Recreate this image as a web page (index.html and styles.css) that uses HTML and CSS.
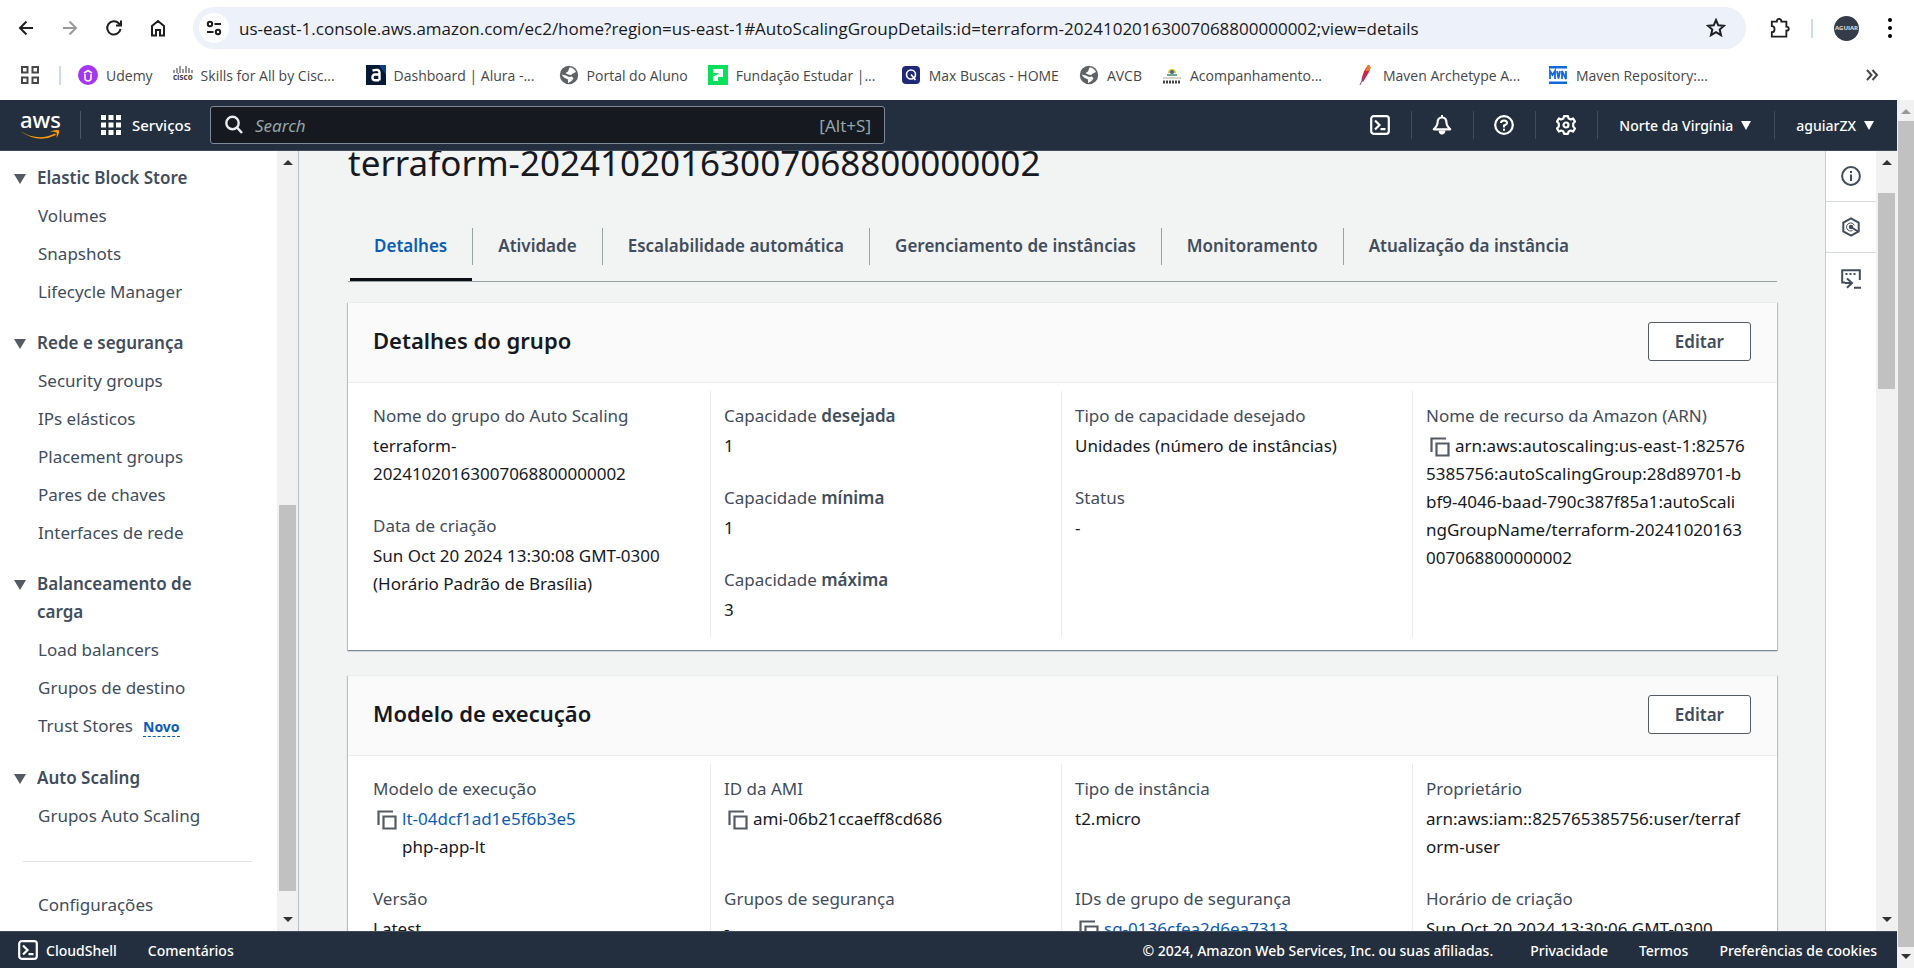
FILE: index.html
```html
<!DOCTYPE html>
<html lang="pt-BR">
<head>
<meta charset="utf-8">
<title>Grupo do Auto Scaling | EC2</title>
<link rel="stylesheet" href="styles.css">
</head>
<body>
<svg class="defs" aria-hidden="true">
  <symbol id="copy" viewBox="0 0 20 20"><path d="M1.500 15V1.500H16M6.500 6.500H18.500V18.500H6.500Z" fill="none" stroke="currentColor" stroke-width="2.200"/></symbol>
  <symbol id="globe" viewBox="0 0 20 20"><circle cx="10" cy="10" r="9.200" fill="#5f6368"/><path d="M10.500 2.500C12 2 16 4 17 7l-3 1.500-2 1.500-3-.500L6.500 8 9 6.500zM2.500 9.500l4.500 1 3 1.500 3-.500 1.500 2-2.500 3-3 1.500v-3.500L5 12.500z" fill="#fff"/></symbol>
  <symbol id="shell" viewBox="0 0 20 20"><rect x="1.200" y="1.200" width="17.600" height="17.600" rx="2.500" fill="none" stroke="currentColor" stroke-width="2.200"/><path d="M5 5.500 9.500 10 5 14.500M10.500 14.200H15.500" fill="none" stroke="currentColor" stroke-width="2.200"/></symbol>
</svg>

<header class="browser">
  <div class="toolbar">
    <nav class="history" aria-label="Histórico">
      <button aria-label="Voltar"><svg viewBox="0 0 20 20"><path d="M17 10H4M10.500 3.500 4 10l6.500 6.500" class="line"/></svg></button>
      <button class="muted" aria-label="Avançar"><svg viewBox="0 0 20 20"><path d="M3 10H16M9.500 3.500 16 10l-6.500 6.500" class="line"/></svg></button>
      <button aria-label="Recarregar"><svg viewBox="0 0 20 20"><path d="M16.500 11A6.700 6.700 0 1 1 14.800 5.300L17 7.500M17 2.500V7.500H12" class="line"/></svg></button>
      <button aria-label="Página inicial"><svg viewBox="0 0 20 20"><path d="M4 17.500V8L10 3l6 5V17.500H12V12H8V17.500Z" class="line"/></svg></button>
    </nav>
    <div class="address">
      <button class="site-info" aria-label="Informações do site"><svg viewBox="0 0 18 18"><circle cx="5" cy="5" r="2.200" class="line"/><circle cx="13" cy="13" r="2.200" class="line"/><path d="M9.500 5H16M2 13H8.500" class="line"/></svg></button>
      <input class="url" type="text" aria-label="Endereço" value="us-east-1.console.aws.amazon.com/ec2/home?region=us-east-1#AutoScalingGroupDetails:id=terraform-20241020163007068800000002;view=details">
      <button class="star" aria-label="Favoritar"><svg viewBox="0 0 20 20"><path d="M10 2 12.300 7.300 18 7.800 13.700 11.600 15 17.200 10 14.200 5 17.200 6.300 11.600 2 7.800 7.700 7.300Z" class="line"/></svg></button>
    </div>
    <div class="browser-actions">
      <button aria-label="Extensões"><svg viewBox="0 0 22 24"><path d="M2 5H7.500C7.500 1 12.500 1 12.500 5H18V10.500C21.500 10.500 21.500 15 18 15V21.500H2V16.500C6 16.500 6 10 2 10Z" class="line"/></svg></button>
      <span class="bar"></span>
      <button class="avatar" aria-label="Perfil">AGUIAR</button>
      <button aria-label="Menu"><svg viewBox="0 0 20 24"><circle cx="10" cy="4" r="2"/><circle cx="10" cy="12" r="2"/><circle cx="10" cy="20" r="2"/></svg></button>
    </div>
  </div>
  <nav class="bookmarks" aria-label="Favoritos">
    <button class="apps" aria-label="Apps"><svg viewBox="0 0 20 20"><path d="M2 2H7.500V7.500H2ZM12.500 2H18V7.500H12.500ZM2 12.500H7.500V18H2ZM12.500 12.500H18V18H12.500Z" class="line"/></svg></button>
    <span class="bar"></span>
    <a href="#"><svg viewBox="0 0 20 20"><circle cx="10" cy="10" r="10" fill="#a435f0"/><path d="M6 8 10 5.500 14 8M7 9V13Q7 16 10 16T13 13V9" fill="none" stroke="#fff" stroke-width="1.600"/></svg>Udemy</a>
    <a href="#" class="clipped"><svg viewBox="0 0 20 20"><path d="M1 5V8M4 3V8M7 1V8M10 4V8M13 1V8M16 3V8M19 5V8" stroke="#555" stroke-width="1.200"/><text x="0" y="15" font-size="8" font-weight="700" fill="#444">cisco</text></svg>Skills for All by Cisc...</a>
    <a href="#" class="clipped"><svg viewBox="0 0 20 20"><path d="M0 0H20V20H0Z" fill="#051933"/><path d="M13 0H20V10Z" fill="#0b3f8c"/><path d="M6.500 5.500Q13.500 3.500 13.500 7.500V15.500M13.500 9.500H8.500Q6.500 10 6.500 12.500T8.500 15.300H13" fill="none" stroke="#fff" stroke-width="2.400"/></svg>Dashboard | Alura -...</a>
    <a href="#"><svg><use href="#globe"/></svg>Portal do Aluno</a>
    <a href="#" class="clipped"><svg viewBox="0 0 20 20"><path d="M0 0H20V20H0Z" fill="#0be05c"/><path d="M5 4H15V12H10V16H5V11.500L10.500 9V8H5Z" fill="#fff"/></svg>Fundação Estudar |...</a>
    <a href="#"><svg viewBox="0 0 20 20"><rect x="1" y="1" width="18" height="18" rx="4" fill="#1e2a78"/><circle cx="10" cy="9.500" r="4.500" fill="none" stroke="#fff" stroke-width="1.600"/><path d="M10 9.500 14.500 15" stroke="#fff" stroke-width="1.600"/></svg>Max Buscas - HOME</a>
    <a href="#"><svg><use href="#globe"/></svg>AVCB</a>
    <a href="#" class="clipped"><svg viewBox="0 0 20 20"><path d="M6 8A4 4 0 0 1 14 8" fill="#e4c321"/><circle cx="10" cy="7" r="2" fill="#33689b"/><path d="M5 10H15" stroke="#3c8b62" stroke-width="1.500"/><path d="M1 13H19" stroke="#aaa"/><path d="M1 17H19" stroke="#444" stroke-width="3" stroke-dasharray="2 1"/></svg>Acompanhamento...</a>
    <a href="#" class="clipped"><svg viewBox="0 0 20 20"><path d="M13 0Q17 0 14 7L8 17Q6 16 7 12Q9 5 13 0Z" fill="#c9234b"/><path d="M13 0Q17 0 14.500 6L10.500 6Q11 3 13 0Z" fill="#ec7a24"/><path d="M9 11 5 20" stroke="#84519d"/></svg>Maven Archetype A...</a>
    <a href="#" class="clipped"><svg viewBox="0 0 20 20"><path d="M1 1H19V3.500H1ZM1 16.500H19V19H1Z" fill="#1369da"/><path d="M2 14V6L4.500 10 7 6V14M9 6 10.500 13.500 12 6M14 14V6L18 14V6" fill="none" stroke="#1369da" stroke-width="1.800"/></svg>Maven Repository:...</a>
    <button class="more" aria-label="Mais favoritos"><svg viewBox="0 0 14 14"><path d="M2 2 6.500 7 2 12M7.500 2 12 7 7.500 12" class="line"/></svg></button>
  </nav>
</header>

<div class="viewport">
  <div class="console">
    <header class="aws-nav">
      <a class="logo" href="#" aria-label="AWS">aws<svg viewBox="0 0 40 10"><path d="M0 1Q18 12 35 3.500L36 5Q18 14 0 1ZM30 1.500Q38-1 39 .500T36.500 8Q37 4 36.500 2.500Q34 1.500 30 1.500Z" fill="#f90"/></svg></a>
      <span class="rule"></span>
      <button class="services"><svg viewBox="0 0 20 20"><path d="M0 0H5V5H0ZM7.500 0H12.500V5H7.500ZM15 0H20V5H15ZM0 7.500H5V12.500H0ZM7.500 7.500H12.500V12.500H7.500ZM15 7.500H20V12.500H15ZM0 15H5V20H0ZM7.500 15H12.500V20H7.500ZM15 15H20V20H15Z" fill="currentColor"/></svg>Serviços</button>
      <label class="search"><svg viewBox="0 0 20 20"><circle cx="8.500" cy="8" r="6.200" fill="none" stroke="currentColor" stroke-width="2.400"/><path d="M13 12.500 18 18" stroke="currentColor" stroke-width="2.600"/></svg><input type="text" placeholder="Search" aria-label="Search"><span>[Alt+S]</span></label>
      <div class="nav-tools">
        <button aria-label="CloudShell"><svg><use href="#shell"/></svg></button>
        <button aria-label="Notificações"><svg viewBox="0 0 20 20"><path d="M10 2.500C6.500 2.500 5.500 5 5.500 8Q5.500 10.500 1.800 14.300H18.200Q14.500 10.500 14.500 8C14.500 5 13.500 2.500 10 2.500Z" fill="none" stroke="currentColor" stroke-width="2.200" stroke-linejoin="round"/><path d="M10 0V3" stroke="currentColor" stroke-width="2"/><path d="M6.500 15.500H13.500Q13 19.500 10 19.500T6.500 15.500Z" fill="currentColor"/></svg></button>
        <button aria-label="Ajuda"><svg viewBox="0 0 20 20"><circle cx="10" cy="10" r="8.800" fill="none" stroke="currentColor" stroke-width="2.200"/><path d="M7 8Q7 5.500 10 5.500T13 8Q13 9.500 10 10.500V12.500" fill="none" stroke="currentColor" stroke-width="2"/><path d="M9 13.700H11V15.700H9Z" fill="currentColor"/></svg></button>
        <button aria-label="Configurações"><svg viewBox="0 0 20 20"><path d="M8 1.200H12L12.600 3.500 14.800 4.500 17 3.400 19 6.600 17.200 8.500V11.500L19 13.400 17 16.600 14.800 15.500 12.600 16.500 12 18.800H8L7.400 16.500 5.200 15.500 3 16.600 1 13.400 2.800 11.500V8.500L1 6.600 3 3.400 5.200 4.500 7.400 3.500Z" fill="none" stroke="currentColor" stroke-width="2.200" stroke-linejoin="round"/><circle cx="10" cy="10" r="2.500" fill="none" stroke="currentColor" stroke-width="2.200"/></svg></button>
        <button class="menu">Norte da Virgínia<i class="caret"></i></button>
        <button class="menu">aguiarZX<i class="caret"></i></button>
      </div>
    </header>

    <div class="workspace">
      <aside class="sidebar">
        <nav class="side-nav" aria-label="EC2">
          <section>
            <button class="group"><i class="caret"></i>Elastic Block Store</button>
            <a href="#">Volumes</a><a href="#">Snapshots</a><a href="#">Lifecycle Manager</a>
          </section>
          <section>
            <button class="group"><i class="caret"></i>Rede e segurança</button>
            <a href="#">Security groups</a><a href="#">IPs elásticos</a><a href="#">Placement groups</a><a href="#">Pares de chaves</a><a href="#">Interfaces de rede</a>
          </section>
          <section>
            <button class="group"><i class="caret"></i><span>Balanceamento de<br>carga</span></button>
            <a href="#">Load balancers</a><a href="#">Grupos de destino</a><a href="#">Trust Stores<span class="new">Novo</span></a>
          </section>
          <section>
            <button class="group"><i class="caret"></i>Auto Scaling</button>
            <a href="#">Grupos Auto Scaling</a>
          </section>
          <hr>
          <a href="#">Configurações</a>
        </nav>
        <div class="scroll scroll-side"><i class="up"></i><i class="before"></i><i class="thumb"></i><i class="after"></i><i class="down"></i></div>
      </aside>

      <main class="content">
        <h1>terraform-20241020163007068800000002</h1>
        <div class="tabs" role="tablist">
          <button role="tab" aria-selected="true">Detalhes</button>
          <button role="tab" aria-selected="false">Atividade</button>
          <button role="tab" aria-selected="false">Escalabilidade automática</button>
          <button role="tab" aria-selected="false">Gerenciamento de instâncias</button>
          <button role="tab" aria-selected="false">Monitoramento</button>
          <button role="tab" aria-selected="false">Atualização da instância</button>
        </div>

        <section class="card">
          <header><h2>Detalhes do grupo</h2><button>Editar</button></header>
          <div class="columns">
            <dl>
              <div><dt>Nome do grupo do Auto Scaling</dt><dd>terraform-<br>20241020163007068800000002</dd></div>
              <div><dt>Data de criação</dt><dd>Sun Oct 20 2024 13:30:08 GMT-0300<br>(Horário Padrão de Brasília)</dd></div>
            </dl>
            <dl>
              <div><dt>Capacidade <b>desejada</b></dt><dd>1</dd></div>
              <div><dt>Capacidade <b>mínima</b></dt><dd>1</dd></div>
              <div><dt>Capacidade <b>máxima</b></dt><dd>3</dd></div>
            </dl>
            <dl>
              <div><dt>Tipo de capacidade desejado</dt><dd>Unidades (número de instâncias)</dd></div>
              <div><dt>Status</dt><dd>-</dd></div>
            </dl>
            <dl>
              <div><dt>Nome de recurso da Amazon (ARN)</dt><dd><svg class="copy"><use href="#copy"/></svg>arn:aws:autoscaling:us-east-1:82576<br>5385756:autoScalingGroup:28d89701-b<br>bf9-4046-baad-790c387f85a1:autoScali<br>ngGroupName/terraform-20241020163<br>007068800000002</dd></div>
            </dl>
          </div>
        </section>

        <section class="card">
          <header><h2>Modelo de execução</h2><button>Editar</button></header>
          <div class="columns rows">
            <dl>
              <div><dt>Modelo de execução</dt><dd><svg class="copy"><use href="#copy"/></svg><a href="#">lt-04dcf1ad1e5f6b3e5</a><span class="under">php-app-lt</span></dd></div>
              <div><dt>Versão</dt><dd>Latest</dd></div>
            </dl>
            <dl>
              <div><dt>ID da AMI</dt><dd><svg class="copy"><use href="#copy"/></svg>ami-06b21ccaeff8cd686</dd></div>
              <div><dt>Grupos de segurança</dt><dd>-</dd></div>
            </dl>
            <dl>
              <div><dt>Tipo de instância</dt><dd>t2.micro</dd></div>
              <div><dt>IDs de grupo de segurança</dt><dd><svg class="copy"><use href="#copy"/></svg><a href="#">sg-0136cfea2d6ea7313</a></dd></div>
            </dl>
            <dl>
              <div><dt>Proprietário</dt><dd>arn:aws:iam::825765385756:user/terraf<br>orm-user</dd></div>
              <div><dt>Horário de criação</dt><dd>Sun Oct 20 2024 13:30:06 GMT-0300</dd></div>
            </dl>
          </div>
        </section>
      </main>

      <aside class="tools">
        <button aria-label="Informações"><svg viewBox="0 0 20 20"><circle cx="10" cy="10" r="8.900" class="ink"/><path d="M10 8.500V15M10 5V7" class="ink"/></svg></button>
        <button aria-label="Recursos"><svg viewBox="0 0 20 20"><path d="M10 1.300 17.700 5.600V14.400L10 18.700 2.300 14.400V5.600Z" class="ink"/><path d="M10 10 17 14.500" class="ink"/><path d="M13.300 8.500A4 4 0 1 0 11.500 13.500" fill="none" stroke="currentColor" stroke-width="1"/><circle cx="10" cy="10" r="2.200" fill="currentColor"/></svg></button>
        <button aria-label="Terminal"><svg viewBox="0 0 20 20"><path d="M4 13.500H1.200V1.200H18.800V11M13 18.800H20M6 9.500 11 14 6 18.800M4 14H10.500" class="ink"/><path d="M4.500 5H6.500M8.500 5H10.500M12.500 5H14.500" class="ink"/></svg></button>
      </aside>
      <div class="scroll scroll-main"><i class="up"></i><i class="before"></i><i class="thumb"></i><i class="after"></i><i class="down"></i></div>
    </div>

    <footer class="aws-footer">
      <button><svg><use href="#shell"/></svg>CloudShell</button>
      <a href="#">Comentários</a>
      <span class="copyright">© 2024, Amazon Web Services, Inc. ou suas afiliadas.</span>
      <a href="#">Privacidade</a>
      <a href="#">Termos</a>
      <a href="#">Preferências de cookies</a>
    </footer>
  </div>
  <div class="scroll scroll-page"><i class="up"></i><i class="before"></i><i class="thumb"></i><i class="after"></i><i class="down"></i></div>
</div>
</body>
</html>
```
FILE: styles.css
```css
* { box-sizing: border-box; }
html, body { height: 100%; }
body {
  margin: 0;
  display: flex;
  flex-direction: column;
  overflow: hidden;
  font-family: "Noto Sans", "Open Sans", sans-serif;
  font-size: 17px;
  color: #16191f;
  background: #fff;
}
button { font: inherit; color: inherit; background: none; border: 0; padding: 0; display: flex; align-items: center; justify-content: center; white-space: nowrap; }
input { font: inherit; border: 0; padding: 0; background: none; outline: 0; min-width: 0; }
a { text-decoration: none; color: inherit; }
svg { flex: none; display: block; width: 20px; height: 20px; }
h1, h2, dl, dd, dt { margin: 0; }
i { display: block; }
.defs { position: absolute; width: 0; height: 0; }
.line { fill: none; stroke: currentColor; stroke-width: 2; }

/* browser chrome */
.browser { flex: none; font-family: "Open Sans", "Noto Sans", sans-serif; color: #1f1f1f; }
.toolbar { height: 56px; display: flex; align-items: center; padding: 0 14px 0 4px; }
.history { display: flex; margin-right: 13px; }
.history button { width: 44px; height: 44px; }
.history .muted { color: #9a9a9a; }
.address { flex: 1; height: 42px; border-radius: 21px; background: #ecf1fa; display: flex; align-items: center; padding: 0 20px 0 6px; }
.site-info { width: 30px; height: 30px; border-radius: 50%; background: #fff; }
.site-info svg { width: 18px; height: 18px; }
.url { flex: 1; margin-left: 10px; font-size: 17px; height: 30px; color: #1a1a1a; }
.browser-actions { display: flex; align-items: center; gap: 21px; padding-left: 24px; }
.browser-actions svg { height: 24px; }
.bar { width: 2px; height: 19px; background: #c7dcfb; }
.avatar { width: 25px; height: 25px; border-radius: 50%; background: #343c4a; color: #ddd; font-size: 6px; font-weight: 700; }
.bookmarks { height: 44px; display: flex; align-items: center; gap: 20px; padding: 0 35px 6px 20px; font-size: 14px; color: #474747; white-space: nowrap; }
.bookmarks a { display: flex; align-items: center; gap: 8px; }
.bookmarks .clipped { width: 173px; }
.bookmarks .bar { margin: 0 -3px 0 -1px; }
.more { margin-left: auto; }
.more svg { width: 14px; height: 14px; }

/* page area */
.viewport { flex: 1; min-height: 0; display: flex; }
.console { flex: 1; min-width: 0; display: flex; flex-direction: column; }
.caret { width: 0; height: 0; border: 5px solid transparent; border-top: 9px solid currentColor; border-bottom: 0; }

.aws-nav { flex: none; height: 51px; background: #232f3e; border-bottom: 1px solid #414d5c; color: #fff; display: flex; align-items: center; padding-left: 20px; font-size: 15px; font-weight: 500; }
.logo { width: 40px; font-size: 22px; line-height: 17px; text-align: center; }
.logo svg { width: 40px; height: 10px; margin-top: 2px; }
.rule { width: 1px; height: 28px; background: #4b5563; margin: 0 20px; }
.services { gap: 11px; }
.search { width: 675px; height: 38px; margin-left: 19px; padding: 0 13px; border: 1px solid #7d8998; border-radius: 3px; background: #161920; display: flex; align-items: center; gap: 11px; color: #eaeded; font-size: 17px; font-weight: 400; }
.search input { flex: 1; color: #fff; }
.search input::placeholder { color: #95a5a6; font-style: italic; opacity: 1; }
.search span { color: #95a5a6; }
.nav-tools { margin-left: auto; display: flex; font-size: 14px; }
.nav-tools button { height: 28px; padding: 0 21px 0 20px; gap: 8px; border-left: 1px solid #414d5c; }
.nav-tools button:first-child { border-left: 0; }
.nav-tools .menu { padding: 0 23px 0 21px; }

.workspace { flex: 1; min-height: 0; display: flex; }
.sidebar { flex: none; width: 299px; display: flex; border-right: 1px solid #b6bec9; }
.side-nav { flex: 1; overflow: hidden; padding: 13px 25px 0 38px; color: #414d5c; line-height: 28px; }
.side-nav section { display: flex; flex-direction: column; gap: 10px; margin-bottom: 23px; }
.side-nav a { display: block; }
.group { font-weight: 600; justify-content: flex-start; align-items: flex-start; gap: 11px; margin-left: -24px; text-align: left; line-height: 28px; }
.group .caret { margin-top: 10px; border-width: 10px 6px 0; color: #545b64; }
.side-nav hr { margin: 31px 0 29px -15px; border: 0; border-top: 1px solid #e1e4e5; }
.new { margin-left: 10px; font-size: 14px; font-weight: 700; color: #0b5cb5; border-bottom: 1px dashed #0b5cb5; }

.content { flex: 1; min-width: 0; overflow: hidden; background: #f2f3f3; padding: 0 48px 0 49px; }
.content h1 { margin-top: -10px; font-size: 35px; line-height: 44px; font-weight: 400; }
.tabs { margin-top: 43px; height: 54px; display: flex; align-items: flex-start; border-bottom: 1px solid #95a5a6; }
.tabs button { position: relative; height: 37px; padding: 0 25px 3px; border-left: 1px solid #95a5a6; color: #414d5c; font-weight: 600; }
.tabs button:first-child { border-left-color: transparent; }
.tabs [aria-selected="true"] { color: #0b5cb5; }
.tabs [aria-selected="true"]::after { content: ""; position: absolute; left: 1px; right: 0; bottom: -16px; height: 3px; background: #0b0e14; }

.card { margin-top: 20px; background: #fff; border-top: 1px solid #eaeded; box-shadow: 0 1px 1px #7d8998, 1px 1px 1px #c4cbcf, -1px 1px 1px #c4cbcf; }
.card + .card { margin-top: 25px; }
.card header { height: 80px; padding: 0 26px 3px 25px; background: #fafafa; border-bottom: 1px solid #eaeded; display: flex; align-items: center; justify-content: space-between; }
.card h2 { font-size: 22px; font-weight: 600; line-height: 28px; margin-bottom: 3px; }
.card header button { height: 39px; padding: 0 26px; border: 1px solid #545b64; border-radius: 3px; background: #fff; color: #414d5c; font-weight: 600; }
.columns { display: grid; grid-template-columns: repeat(4, 1fr); padding: 8px 14px 13px 11px; }
.columns dl { padding: 11px 13px 13px; border-left: 1px solid #eaeded; display: flex; flex-direction: column; gap: 24px; min-width: 0; }
.columns dl:first-child { border-left-color: transparent; }
.rows dl > div:first-child { min-height: 86px; }
dt { line-height: 27px; margin-bottom: 3px; color: #414d5c; }
dt b { font-weight: 600; }
dd { line-height: 28px; white-space: nowrap; }
dd a { color: #0b5cb5; }
.copy { display: inline-block; width: 20px; height: 20px; margin: 0 5px 0 4px; vertical-align: -5px; color: #545b64; }
.under { display: block; padding-left: 29px; }

.tools { flex: none; width: 51px; border-left: 1px solid #c6cdd2; background: #fff; color: #414d5c; }
.tools button { width: 100%; height: 51px; border-bottom: 1px solid #d5dbdb; }
.tools button:last-child { border-bottom: 0; }
.ink { fill: none; stroke: currentColor; stroke-width: 2; }

.aws-footer { flex: none; height: 37px; padding: 0 20px 0 18px; background: #232f3e; border-top: 1px solid #414d5c; color: #fff; display: flex; align-items: center; gap: 31px; font-size: 14px; font-weight: 500; white-space: nowrap; }
.aws-footer button { gap: 8px; }
.copyright { margin-left: auto; margin-right: 6px; }

/* scrollbars */
.scroll { flex: none; width: 21px; background: #f1f1f1; display: flex; flex-direction: column; align-items: center; }
.scroll .up, .scroll .down { flex: none; width: 0; height: 5px; border: 5px solid transparent; border-top-width: 0; border-bottom: 5px solid #333; margin: 9px 0 7px; }
.scroll .down { border-bottom-width: 0; border-top: 5px solid #333; margin: 7px 0 9px; }
.thumb { width: 17px; background: #c1c1c1; }
.scroll-side .before { flex: 333; }
.scroll-side .thumb { flex: 386; }
.scroll-side .after { flex: 19; }
.scroll-main .before { flex: 21; }
.scroll-main .thumb { flex: 196; }
.scroll-main .after { flex: 521; }
.scroll-page { width: 17px; }
.scroll-page .thumb { flex: 1; width: 100%; margin-left: 2px; }
.scroll-page .up { border-bottom-color: #999; }
```
